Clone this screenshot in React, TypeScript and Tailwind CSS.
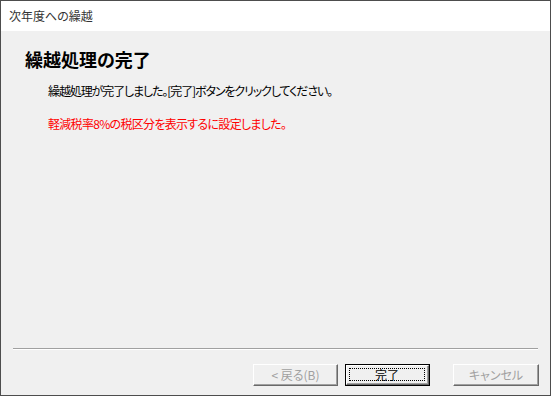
const font = "font-['MS_UI_Gothic','Noto_Sans_CJK_JP',sans-serif] [font-feature-settings:'palt']"

function WinButton({
  label,
  disabled,
  isDefault,
  width = 'w-[85px]',
}: {
  label: string
  disabled?: boolean
  isDefault?: boolean
  width?: string
}) {
  const face = (
    <div className="flex-1 flex border-t border-l border-white border-b border-r border-b-[#696969] border-r-[#696969] bg-[#f0f0f0] shadow-[inset_-1px_-1px_0_#a0a0a0]">
      {isDefault ? (
        <div className="flex-1 m-[2px] mr-[3px] mb-[3px] border border-dotted border-black flex items-center justify-center text-black">
          {label}
        </div>
      ) : (
        <div className={`flex-1 flex items-center justify-center ${disabled ? 'text-[#a0a0a0]' : 'text-black'}`}>
          {label}
        </div>
      )}
    </div>
  )
  return (
    <div className={`${width} h-[22px] flex text-[12px] leading-none ${isDefault ? 'border border-black' : ''}`}>
      {face}
    </div>
  )
}

export default function App() {
  return (
    <div className={`w-[551px] h-[396px] flex flex-col border border-[#4d4d4d] bg-[#f0f0f0] ${font}`}>
      <div className="h-[30px] bg-white flex items-center px-2 text-[12px] text-[#333]">
        次年度への繰越
      </div>

      <div className="flex-1 flex flex-col">
        <div className="pl-6 pt-[16px] text-[18px] leading-[24px] font-bold text-black">
          繰越処理の完了
        </div>
        <div className="pl-[47px] mt-[12px] text-[12px] leading-[16px] tracking-[-1.1px] text-black">
          繰越処理が完了しました。[完了]ボタンをクリックしてください。
        </div>
        <div className="pl-[47px] mt-[17px] text-[12px] leading-[16px] tracking-[-0.7px] text-[#ff0000]">
          軽減税率8%の税区分を表示するに設定しました。
        </div>

        <div className="flex-1" />

        <div className="mx-3 border-t border-t-[#a0a0a0] border-b border-b-white" />

        <div className="flex items-center justify-end pr-[11px] pt-[14px] pb-[9px]">
          <WinButton label="< 戻る(B)" disabled />
          <div className="w-[7px]" />
          <WinButton label="完了" isDefault />
          <div className="w-[23px]" />
          <WinButton label="キャンセル" disabled width="w-[86px]" />
        </div>
      </div>
    </div>
  )
}
